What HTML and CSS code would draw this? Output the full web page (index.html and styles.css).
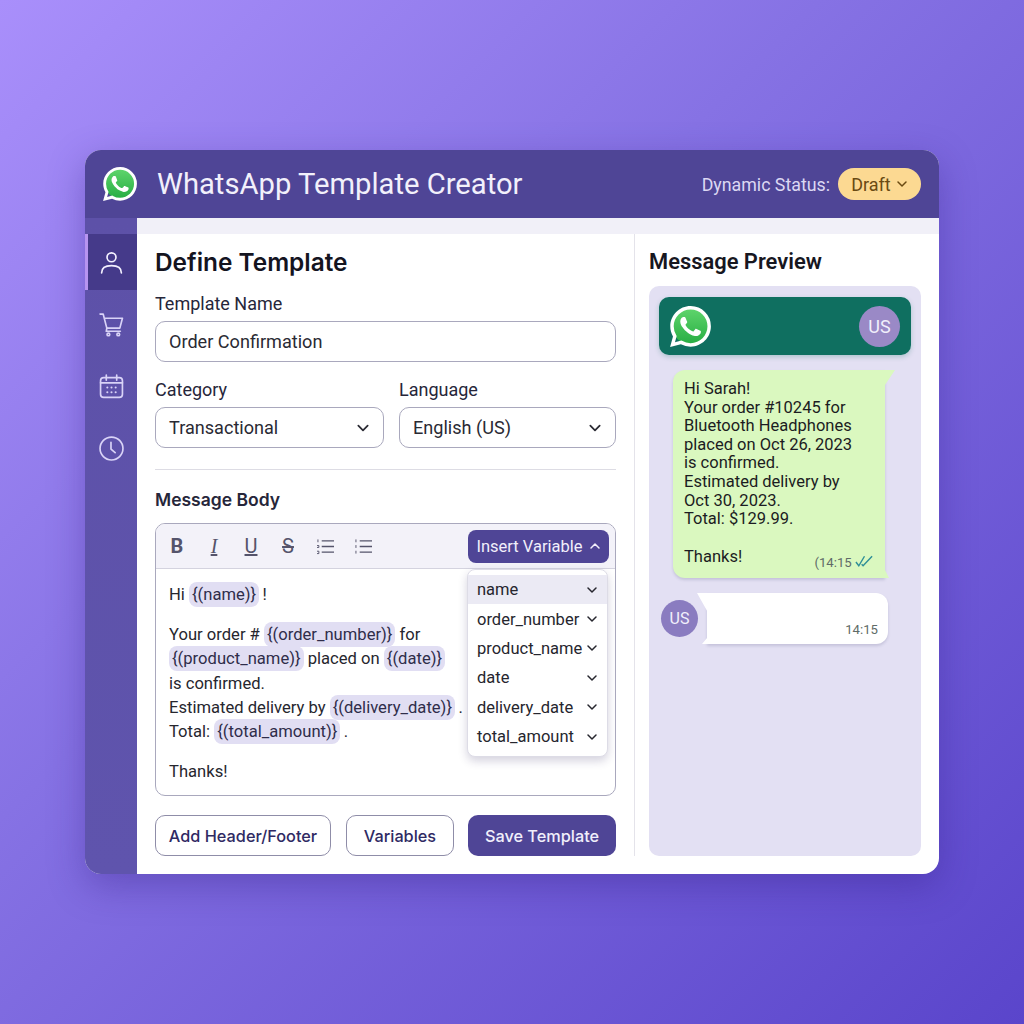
FILE: index.html
```html
<!DOCTYPE html>
<html lang="en">
<head>
    <meta charset="UTF-8">
    <title>WhatsApp Template Creator</title>
    <link rel="stylesheet" href="styles.css">
</head>
<body>
    <svg class="defs" width="0" height="0">
        <symbol id="wa" viewBox="0 0 24 24">
            <circle cx="12" cy="12" r="10.6" fill="url(#wa-green)"/>
            <path fill="#fff" d="M17.472 14.382c-.297-.149-1.758-.867-2.03-.967-.273-.099-.471-.148-.67.15-.197.297-.767.966-.94 1.164-.173.199-.347.223-.644.075-.297-.15-1.255-.463-2.39-1.475-.883-.788-1.48-1.761-1.653-2.059-.173-.297-.018-.458.13-.606.134-.133.298-.347.446-.52.149-.174.198-.298.298-.497.099-.198.05-.371-.025-.52-.075-.149-.669-1.612-.916-2.207-.242-.579-.487-.5-.669-.51-.173-.008-.371-.01-.57-.01-.198 0-.52.074-.792.372-.272.297-1.04 1.016-1.04 2.479 0 1.462 1.065 2.875 1.213 3.074.149.198 2.096 3.2 5.077 4.487.709.306 1.262.489 1.694.625.712.227 1.36.195 1.871.118.571-.085 1.758-.719 2.006-1.413.248-.694.248-1.289.173-1.413-.074-.124-.272-.198-.57-.347m-5.421 7.403h-.004a9.87 9.87 0 01-5.031-1.378l-.361-.214-3.741.982.998-3.648-.235-.374a9.86 9.86 0 01-1.51-5.26c.001-5.45 4.436-9.884 9.888-9.884 2.64 0 5.122 1.03 6.988 2.898a9.825 9.825 0 012.893 6.994c-.003 5.45-4.437 9.884-9.885 9.884m8.413-18.297A11.815 11.815 0 0012.05 0C5.495 0 .16 5.335.157 11.892c0 2.096.547 4.142 1.588 5.945L.057 24l6.305-1.654a11.882 11.882 0 005.683 1.448h.005c6.554 0 11.89-5.335 11.893-11.893a11.821 11.821 0 00-3.48-8.413z"/>
        </symbol>
        <symbol id="chev" viewBox="0 0 12 12">
            <path d="M2 4l4 4 4-4" fill="none" stroke="currentColor" stroke-width="1.5" stroke-linecap="round" stroke-linejoin="round"/>
        </symbol>
        <linearGradient id="wa-green" x1="0" y1="0" x2="0" y2="1">
            <stop offset="0" stop-color="#5fd56c"/>
            <stop offset="1" stop-color="#27ad43"/>
        </linearGradient>
    </svg>

    <div class="window">
        <header class="topbar">
            <svg class="wa-logo"><use href="#wa"/></svg>
            <h1>WhatsApp Template Creator</h1>
            <span class="status-label">Dynamic Status:</span>
            <span class="status-pill">Draft <svg class="chev"><use href="#chev"/></svg></span>
        </header>

        <div class="app-body">
            <nav class="sidebar">
                <a class="nav-item active">
                    <svg viewBox="0 0 24 24"><circle cx="12" cy="7" r="4.300"/><path d="M2.500 22c0-5.500 4-7 9.500-7s9.500 1.500 9.500 7"/></svg>
                </a>
                <a class="nav-item">
                    <svg viewBox="0 0 24 24"><path d="M1 2h3l3.500 13.500h12.500l2.500-9.500H5"/><path d="M7.500 15.500l-.5 3h13.500"/><circle cx="9" cy="21.500" r="1.300"/><circle cx="18.500" cy="21.500" r="1.300"/></svg>
                </a>
                <a class="nav-item">
                    <svg viewBox="0 0 24 24"><rect x="1.500" y="3.500" width="21" height="19" rx="3"/><path d="M1.500 8.500h21M7 1v5M17 1v5"/><path class="dots" d="M8 13h.01M12 13h.01M16 13h.01M8 17.500h.01M12 17.500h.01M16 17.500h.01"/></svg>
                </a>
                <a class="nav-item">
                    <svg viewBox="0 0 24 24"><circle cx="12" cy="12" r="11"/><path d="M11.500 6v6.500l4 3.500"/></svg>
                </a>
            </nav>

            <div class="content">
                <div class="strip"></div>
                <div class="panels">
                    <section class="define">
                        <h2>Define Template</h2>
                        <label class="field-label">Template Name</label>
                        <div class="input">Order Confirmation</div>

                        <div class="field-row">
                            <div class="field-col">
                                <label class="field-label">Category</label>
                                <div class="input select">Transactional <svg class="chev"><use href="#chev"/></svg></div>
                            </div>
                            <div class="field-col">
                                <label class="field-label">Language</label>
                                <div class="input select">English (US) <svg class="chev"><use href="#chev"/></svg></div>
                            </div>
                        </div>

                        <hr class="divider">

                        <h3>Message Body</h3>
                        <div class="editor">
                            <div class="toolbar">
                                <span class="tool tool-b">B</span>
                                <span class="tool tool-i">I</span>
                                <span class="tool tool-u">U</span>
                                <span class="tool tool-s">S</span>
                                <svg class="tool-list" viewBox="0 0 20 18"><path d="M6 3h13M6 9h13M6 15h13"/><path class="num" d="M2 1.500v3M1 8h2v2H1M1 14h2v2.500H1"/></svg>
                                <svg class="tool-list" viewBox="0 0 20 18"><path d="M6 3h13M6 9h13M6 15h13"/><path class="num" d="M2 1.500v3M2 7.500v3M2 13.500v3"/></svg>
                                <button class="insert-btn">Insert Variable <svg class="chev up"><use href="#chev"/></svg></button>
                            </div>
                            <div class="editor-text">
                                <p>Hi <span class="chip">{(name)}</span>&thinsp;!</p>
                                <p>Your order # <span class="chip">{(order_number)}</span> for<br>
                                <span class="chip">{(product_name)}</span> placed on <span class="chip">{(date)}</span><br>
                                is confirmed.<br>
                                Estimated delivery by <span class="chip">{(delivery_date)}</span>&thinsp;.<br>
                                Total: <span class="chip">{(total_amount)}</span>&thinsp;.</p>
                                <p>Thanks!</p>
                            </div>
                            <ul class="var-menu">
                                <li class="hover">name <svg class="chev"><use href="#chev"/></svg></li>
                                <li>order_number <svg class="chev"><use href="#chev"/></svg></li>
                                <li>product_name <svg class="chev"><use href="#chev"/></svg></li>
                                <li>date <svg class="chev"><use href="#chev"/></svg></li>
                                <li>delivery_date <svg class="chev"><use href="#chev"/></svg></li>
                                <li>total_amount <svg class="chev"><use href="#chev"/></svg></li>
                            </ul>
                        </div>

                        <div class="actions">
                            <button class="btn add">Add Header/Footer</button>
                            <button class="btn vars">Variables</button>
                            <button class="btn primary">Save Template</button>
                        </div>
                    </section>

                    <section class="preview">
                        <h2>Message Preview</h2>
                        <div class="phone">
                            <div class="phone-head">
                                <svg class="wa-logo"><use href="#wa"/></svg>
                                <span class="avatar big">US</span>
                            </div>
                            <div class="bubble out">
                                <p>Hi Sarah!<br>Your order #10245 for<br>Bluetooth Headphones<br>placed on Oct 26, 2023<br>is confirmed.<br>Estimated delivery by<br>Oct 30, 2023.<br>Total: $129.99.</p>
                                <div class="bubble-foot">
                                    <span>Thanks!</span>
                                    <span class="time">(14:15 <svg class="ticks" viewBox="0 0 20 12"><path d="M1 7l3 4L10 1M7 9.500l1.500 1.500L18 1"/></svg></span>
                                </div>
                            </div>
                            <div class="incoming">
                                <span class="avatar">US</span>
                                <div class="bubble in"><span class="time">14:15</span></div>
                            </div>
                        </div>
                    </section>
                </div>
            </div>
        </div>
    </div>
</body>
</html>
```

FILE: styles.css
```css
* {
    box-sizing: border-box;
}

body {
    margin: 0;
    height: 1024px;
    padding: 150px 85px;
    font-family: Roboto, sans-serif;
    color: #1d1d2b;
    background: linear-gradient(135deg, #a98ffb 0%, #8672e4 40%, #5a45cb 100%);
    overflow: hidden;
}

.defs {
    position: absolute;
}

.window {
    width: 854px;
    height: 724px;
    border-radius: 16px;
    overflow: hidden;
    display: flex;
    flex-direction: column;
    background: #fff;
    box-shadow: 0 12px 36px rgba(50, 30, 130, 0.35);
}

/* top bar */
.topbar {
    height: 68px;
    flex: none;
    display: flex;
    align-items: center;
    padding: 0 18px;
    background: #4f4596;
    color: #fff;
}

.topbar .wa-logo {
    width: 34px;
    height: 34px;
    flex: none;
}

.topbar h1 {
    margin: 0 auto 0 20px;
    font-size: 29.200px;
    font-weight: 450;
    color: #f2f0fb;
}

.status-label {
    font-size: 17.800px;
    color: #dcd8f3;
    margin-right: 8px;
}

.status-pill {
    width: 83px;
    height: 32px;
    display: flex;
    align-items: center;
    justify-content: center;
    gap: 5px;
    border-radius: 16px;
    background: #fcd992;
    color: #6a4a12;
    font-size: 18px;
}

.chev {
    width: 12px;
    height: 12px;
    flex: none;
}

.chev.up {
    transform: rotate(180deg);
}

/* sidebar */
.app-body {
    flex: 1;
    display: flex;
    min-height: 0;
}

.sidebar {
    width: 52px;
    flex: none;
    padding-top: 16px;
    background: linear-gradient(180deg, #5d51a8, #5f54ad);
}

.nav-item {
    height: 62px;
    display: flex;
    align-items: center;
    justify-content: center;
}

.nav-item svg {
    width: 25px;
    height: 25px;
    fill: none;
    stroke: #d9d3f7;
    stroke-width: 1.600;
    stroke-linecap: round;
    stroke-linejoin: round;
}

.nav-item svg .dots {
    stroke-width: 2;
}

.nav-item.active {
    height: 56px;
    margin-bottom: 3px;
    background: #453a8a;
    border-left: 3px solid #b794f0;
    padding-right: 3px;
}

.nav-item.active svg {
    stroke: #f3f0ff;
}

/* main area */
.content {
    flex: 1;
    min-width: 0;
    display: flex;
    flex-direction: column;
}

.strip {
    height: 16px;
    flex: none;
    background: #f1f0f8;
}

.panels {
    flex: 1;
    display: flex;
    min-height: 0;
}

.define {
    width: 498px;
    flex: none;
    margin-bottom: 18px;
    padding: 13px 18px 0 18px;
    border-right: 1px solid #e4e3ea;
}

.define h2 {
    margin: 0;
    font-family: Inter, sans-serif;
    font-size: 24.400px;
    font-weight: 600;
    line-height: 30px;
    color: #14141f;
}

.field-label {
    display: block;
    margin: 16px 0 6px;
    font-size: 18px;
    line-height: 22px;
    color: #26263a;
}

.input {
    height: 41px;
    display: flex;
    align-items: center;
    justify-content: space-between;
    padding: 0 13px;
    border: 1.500px solid #a9a8bd;
    border-radius: 10px;
    font-size: 18.100px;
    color: #2a2a33;
}

.input .chev {
    width: 14px;
    height: 14px;
}

.field-row {
    display: flex;
    gap: 15px;
    margin-top: 1px;
}

.field-col:first-child {
    width: 229px;
}

.field-col:last-child {
    flex: 1;
}

.divider {
    margin: 21px 0 0;
    border: 0;
    border-top: 1px solid #dddce4;
}

.define h3 {
    margin: 19px 0 12px;
    font-family: Inter, sans-serif;
    font-size: 17.500px;
    font-weight: 600;
    line-height: 22px;
    color: #26263a;
}

/* editor */
.editor {
    position: relative;
    height: 273px;
    border: 1.500px solid #a9a8bd;
    border-radius: 10px;
    overflow: hidden;
}

.toolbar {
    height: 45px;
    display: flex;
    align-items: center;
    padding: 0 6px 0 13px;
    background: #f3f2f9;
    border-bottom: 1px solid #d4d3df;
    color: #55546b;
}

.tool {
    width: 16px;
    margin-right: 21px;
    text-align: center;
    font-size: 20px;
    line-height: 22px;
}

.tool-b {
    font-weight: 700;
}

.tool-i {
    font-style: italic;
    font-family: "Liberation Serif", serif;
    text-decoration: underline;
}

.tool-u {
    text-decoration: underline;
}

.tool-s {
    text-decoration: line-through;
    margin-right: 20px;
}

.tool-list {
    width: 19px;
    height: 17px;
    margin-right: 19px;
    fill: none;
    stroke: #55546b;
    stroke-width: 1.400;
}

.tool-list .num {
    stroke-width: 1;
}

.insert-btn {
    margin-left: auto;
    width: 141px;
    height: 33px;
    display: flex;
    align-items: center;
    justify-content: center;
    gap: 6px;
    padding: 0;
    border: 0;
    border-radius: 8px;
    background: #4f4596;
    color: #f1effb;
    font: 400 16.500px Roboto, sans-serif;
}

.editor-text {
    padding: 14px 13px;
    font-size: 16.600px;
    line-height: 24.200px;
    color: #26262e;
}

.editor-text p {
    margin: 0 0 16px;
}

.chip {
    padding: 3px;
    border-radius: 8px;
    background: #e1def3;
    color: #2f2d4a;
}

/* variable dropdown */
.var-menu {
    position: absolute;
    top: 45px;
    left: 311px;
    width: 141px;
    height: 188px;
    margin: 0;
    padding: 5px 0;
    list-style: none;
    background: #fff;
    border: 1px solid #dddce6;
    border-radius: 8px;
    box-shadow: 0 4px 10px rgba(40, 30, 90, 0.2);
}

.var-menu li {
    height: 29.400px;
    display: flex;
    align-items: center;
    justify-content: space-between;
    padding: 0 9px;
    font-size: 16.500px;
    color: #26262e;
}

.var-menu li.hover {
    background: #ebeaf4;
}

.actions {
    display: flex;
    gap: 15px;
    margin-top: 19px;
}

.btn {
    flex: none;
    height: 41px;
    padding: 0;
    border: 1.500px solid #8f8da8;
    border-radius: 10px;
    background: #fff;
    color: #2f2a63;
    font: 500 16.300px Inter, sans-serif;
    white-space: nowrap;
}

.btn.add {
    width: 176px;
}

.btn.vars {
    width: 108px;
}

.btn.primary {
    width: 148px;
    border: 0;
    margin-left: -1px;
    background: #4f4596;
    color: #f1effb;
}

/* preview */
.preview {
    flex: 1;
    padding: 14px 18px 18px 14px;
    display: flex;
    flex-direction: column;
}

.preview h2 {
    margin: 0;
    font-family: Roboto, sans-serif;
    font-size: 21.900px;
    font-weight: 600;
    line-height: 28px;
    color: #17171f;
}

.phone {
    flex: 1;
    margin-top: 10px;
    padding: 11px 10px;
    border-radius: 10px;
    background: #e3e0f3;
}

.phone-head {
    height: 58px;
    display: flex;
    align-items: center;
    justify-content: space-between;
    padding: 0 11px;
    border-radius: 10px;
    background: #0f6f60;
    box-shadow: 0 2px 5px rgba(15, 111, 96, 0.25);
}

.phone-head .wa-logo {
    width: 41px;
    height: 41px;
}

.avatar {
    width: 37px;
    height: 37px;
    flex: none;
    display: flex;
    align-items: center;
    justify-content: center;
    border-radius: 50%;
    background: #8a7cc0;
    color: #f1effb;
    font-size: 16px;
}

.avatar.big {
    width: 41px;
    height: 41px;
    font-size: 18px;
    background: #9a89c6;
}

.bubble {
    position: relative;
    font-size: 16.500px;
    line-height: 18.600px;
    color: #1c1c22;
}

.bubble.out {
    width: 212px;
    height: 208px;
    margin: 15px 0 0 14px;
    padding: 10px 11px;
    border-radius: 12px 0 0 12px;
    background: #daf8bf;
    box-shadow: 0 2px 3px rgba(60, 60, 110, 0.18);
}

.bubble.out p {
    margin: 0;
}

/* bubble tails */
.bubble.out::after {
    content: "";
    position: absolute;
    top: 0;
    right: -10px;
    width: 10px;
    height: 100%;
    background: #daf8bf;
    clip-path: polygon(0 0, 100% 0, 0 15px, 0 calc(100% - 8px), 40% 100%, 0 100%);
}

.bubble-foot {
    display: flex;
    justify-content: space-between;
    align-items: flex-end;
    margin-top: 19px;
}

.bubble .time {
    font-size: 13.200px;
    line-height: 16px;
    color: #5f6b68;
}

.bubble-foot .time {
    margin-bottom: -5px;
}

.ticks {
    width: 19px;
    height: 12px;
    fill: none;
    stroke: #2f8f98;
    stroke-width: 1.500;
}

.incoming {
    display: flex;
    align-items: center;
    margin: 15px 0 0 2px;
}

.bubble.in {
    width: 181px;
    height: 51px;
    margin-left: 9px;
    padding-right: 10px;
    display: flex;
    align-items: flex-end;
    justify-content: flex-end;
    padding-bottom: 6px;
    border-radius: 0 12px 12px 0;
    background: #fff;
    box-shadow: 0 2px 3px rgba(60, 60, 110, 0.18);
}

.bubble.in::before {
    content: "";
    position: absolute;
    top: 0;
    left: -10px;
    width: 10px;
    height: 100%;
    background: #fff;
    clip-path: polygon(0 0, 100% 0, 100% 100%, 50% 100%, 100% 88%, 100% 35%);
}
```
